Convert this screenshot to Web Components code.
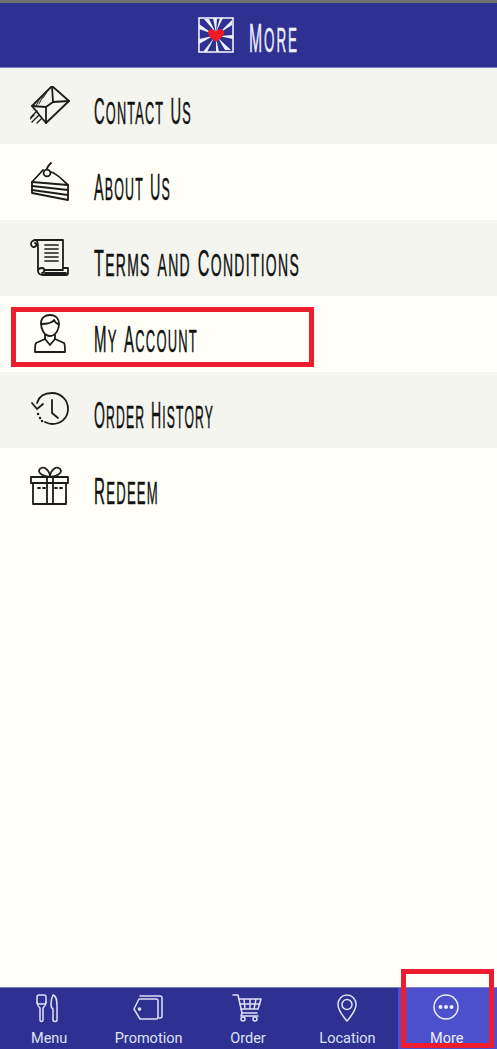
<!DOCTYPE html>
<html lang="en">
<head>
<meta charset="utf-8">
<title>More</title>
<style>
  html, body { margin: 0; height: 100%; background: #fffff8; }
  body { font-family: "Liberation Sans", sans-serif; }
</style>
</head>
<body>
<app-shell>
  <app-header slot="header">More</app-header>
  <more-row shade label="Contact Us" width="98">
    <svg viewBox="0 0 40 40"><path d="M22 0 39 15 16 37 2 20Z"/><path d="M22 0 23 16 39 15M2 20 16 21 16 37M16 21 23 16"/><path d="M9 14 6 20M13 10 9 18M17 6 13 12" stroke-width="1"/><path d="M7 25 1 31M9 29 2 36M4 29 0 33M11 33 7 37" stroke-width="1.300"/></svg>
  </more-row>
  <more-row label="About Us" width="77">
    <svg viewBox="0 0 40 40"><path d="M13 8 2 20V31L38 38V23C32 17 25 11 21 10"/><path d="M2 20 38 23M2 24 38 28M2 28 38 33"/><circle cx="17" cy="11" r="3.400"/><path d="M17 7C17 5 19 3 21 1"/></svg>
  </more-row>
  <more-row shade label="Terms and Conditions" width="206">
    <svg viewBox="0 0 40 40"><path d="M6 2H33V30M8 9V32M6 2C3 2 1 4 1 6 1 9 4 10 6 8 7 7 6 5 5 5M6 2C8 3 8 6 8 9"/><path d="M33 30H38V35C38 37 37 37 36 37H13C10 37 8 35 8 33 8 30 10 30 12 30 15 30 15 35 12 35"/><path d="M15 32H33M15 35H36"/><path d="M15 7H28M15 11H28M15 15H28M15 19H28M15 23H28" stroke-width="1.700"/></svg>
  </more-row>
  <more-row label="My Account" width="104">
    <svg viewBox="0 0 40 40"><path d="M11 9C11 4 15 1 20 1 26 1 29 5 29 10 29 15 26 22 20 22 14 22 11 15 11 9Z"/><path d="M11 10C15 10 22 9 24 6 25 8 27 10 29 10"/><path d="M15 21V25L6 29C5 30 5 32 5 38H35C35 32 35 30 34 29L25 25V21"/><path d="M15 25 20 31 25 25"/></svg>
  </more-row>
  <more-row shade label="Order History" width="120">
    <svg viewBox="0 0 40 40"><path d="M7 13C9 6 15 3 22 3 31 3 38 10 38 19 38 28 31 34 22 34 19 34 17 33 15 32"/><path d="M2 13 7 19 13 14M22 10V23L28 28"/><path d="M8 24H8.100M10 28H10.100M12 31H12.100" stroke-width="2.400"/></svg>
  </more-row>
  <more-row label="Redeem" width="65">
    <svg viewBox="0 0 40 40"><path d="M1 11H38V17H1ZM3 17V38H36V17M17 11V38M23 11V38"/><path d="M20 11C14 10 9 8 9 5 9 2 13 1 15 2 18 4 20 8 20 11 20 8 22 4 25 2 27 1 31 2 31 5 31 8 26 10 20 11Z"/><path d="M8 22H10M13 22H15M25 22H27M30 22H32"/></svg>
  </more-row>
  <tab-bar slot="footer">
    <tab-item label="Menu">
      <svg viewBox="0 0 30 30"><rect x="3" y="1" width="9" height="9" rx="2"/><path d="M3 8C3 12 5 13 6 14V26C6 28 9 28 9 26V14C10 13 12 12 12 8"/><path d="M19 1C23 2 23 8 23 13V26C23 28 19 28 19 26V15C17 14 17 12 17 10 17 6 18 3 19 1Z"/></svg>
    </tab-item>
    <tab-item label="Promotion">
      <svg viewBox="0 0 30 30"><path d="M7 2H27C28 2 29 3 29 4V22C29 23 28 24 27 24H26"/><path d="M6 5H23C24 5 25 6 25 7V23C25 24 24 25 23 25H7L1 15Z"/><circle cx="6.500" cy="15" r="1.100" fill="currentColor"/></svg>
    </tab-item>
    <tab-item label="Order">
      <svg viewBox="0 0 30 30"><path d="M1 1H6L10 19H25"/><path d="M7 5H29L26 15H9M12 5 13 15M18 5V15M24 5 22 15M8 10H28M10 19 9 22H26"/><circle cx="11" cy="25" r="2"/><circle cx="23" cy="25" r="2"/></svg>
    </tab-item>
    <tab-item label="Location">
      <svg viewBox="0 0 30 30"><path d="M15 27C11 22 6 17 6 10.500 6 5 10 1 15 1 20 1 24 5 24 10.500 24 17 19 22 15 27Z"/><circle cx="15" cy="10.500" r="5"/></svg>
    </tab-item>
    <tab-item label="More" active>
      <svg viewBox="0 0 30 30"><circle cx="15" cy="13" r="12"/><circle cx="9.500" cy="13" r="2" fill="currentColor" stroke="none"/><circle cx="15" cy="13" r="2" fill="currentColor" stroke="none"/><circle cx="20.500" cy="13" r="2" fill="currentColor" stroke="none"/></svg>
    </tab-item>
  </tab-bar>
  <mark-box slot="overlay" style="--x:11px;--y:307px;--w:303px;--h:60px"></mark-box>
  <mark-box slot="overlay" style="--x:401px;--y:969px;--w:93px;--h:79px"></mark-box>
</app-shell>

<script>
class AppShell extends HTMLElement {
  constructor() {
    super();
    this.attachShadow({ mode: "open" });
    this.shadowRoot.innerHTML = `
      <style>
        :host { display: flex; flex-direction: column; height: 1049px; position: relative; overflow: hidden; background: #fffff8; }
        .status { height: 3px; background: #707070; flex: none; }
        main { flex: 1; }
      </style>
      <div class="status"></div>
      <slot name="header"></slot>
      <main><slot></slot></main>
      <slot name="footer"></slot>
      <slot name="overlay"></slot>
    `;
  }
}

function capsMarkup(text) {
  return text.replace(/[A-Z]/g, (c) => `<span class="cap">${c}</span>`);
}

class AppHeader extends HTMLElement {
  constructor() {
    super();
    this.attachShadow({ mode: "open" });
    this.shadowRoot.innerHTML = `
      <style>
        :host { display: flex; align-items: center; justify-content: center; height: 65px; box-sizing: border-box; background: #2e3192; border-bottom: 1px solid #7d80bd; color: #eceefa; }
        svg { width: 36px; height: 36px; margin-left: -1px; flex: none; }
        .title { width: 50px; margin-left: 15px; height: 40px; display: flex; align-items: center; }
        .title span { display: inline-block; font: 400 50px/50px "Liberation Sans", sans-serif; font-variant: small-caps; letter-spacing: 5px; -webkit-text-stroke: .5px currentColor; white-space: nowrap; transform-origin: left center; margin-top: 3px; }
        .title span .cap { font-size: 41px; }
      </style>
      <svg viewBox="0 0 36 36">
        <rect x="1" y="1" width="34" height="34" fill="#2e3192" stroke="#eef0fb" stroke-width="1.600"/>
        <g fill="#eef0fb">
          <path d="M18 16 6 2H11ZM18 16 15 1H19ZM18 15 22 1H25ZM20 17 34 3V8ZM21 19 35 18V22ZM20 21 33 33H27ZM18 21 21 35H18ZM16 21 9 35H5ZM15 19 1 27V22ZM15 17 1 12V7Z"/>
        </g>
        <path d="M18 25C14 22 10 19 10 15.500 10 12 15 11 18 14.500 21 11 26 12 26 15.500 26 19 22 22 18 25Z" fill="#ed1c24"/>
      </svg>
      <div class="title"><span></span></div>
    `;
  }

  connectedCallback() {
    const label = this.shadowRoot.querySelector(".title span");
    label.innerHTML = capsMarkup(this.textContent.trim());
    label.style.transform = `scaleX(${50 / label.getBoundingClientRect().width})`;
  }
}

class MoreRow extends HTMLElement {
  constructor() {
    super();
    this.attachShadow({ mode: "open" });
    this.shadowRoot.innerHTML = `
      <style>
        :host { display: flex; align-items: center; height: 76px; padding-left: 30px; background: #fffff8; color: #121210; }
        :host([shade]) { background: #f4f5ef; }
        .icon { width: 40px; height: 40px; flex: none; margin-right: 24px; }
        ::slotted(svg) { display: block; width: 40px; height: 40px; fill: none; stroke: #1c1c1a; stroke-width: 1.800; stroke-linejoin: round; stroke-linecap: round; }
        .label { display: inline-block; font: 400 46px/44px "Liberation Sans", sans-serif; font-variant: small-caps; letter-spacing: 3px; -webkit-text-stroke: .5px currentColor; white-space: nowrap; transform-origin: left center; margin-top: 7px; }
        .label .cap { font-size: 37px; }
      </style>
      <div class="icon"><slot></slot></div>
      <span class="label"></span>
    `;
  }

  connectedCallback() {
    const label = this.shadowRoot.querySelector(".label");
    label.innerHTML = capsMarkup(this.getAttribute("label"));
    // squeeze the label to the narrow width of the app's display font
    const natural = label.getBoundingClientRect().width;
    const want = Number(this.getAttribute("width"));
    label.style.transform = `scaleX(${want / natural})`;
  }
}

class TabBar extends HTMLElement {
  constructor() {
    super();
    this.attachShadow({ mode: "open" });
    this.shadowRoot.innerHTML = `
      <style>
        :host { display: grid; grid-template-columns: repeat(5, 1fr); height: 62px; background: #2e3192; border-top: 1px solid #7d80bd; box-sizing: border-box; }
      </style>
      <slot></slot>
    `;
  }
}

class TabItem extends HTMLElement {
  constructor() {
    super();
    this.attachShadow({ mode: "open" });
    this.shadowRoot.innerHTML = `
      <style>
        :host { display: flex; flex-direction: column; align-items: center; color: #dfe1f5; padding-top: 6px; min-width: 0; }
        :host([active]) { background: #4c50cd; color: #eceefa; }
        ::slotted(svg) { display: block; width: 30px; height: 30px; margin-left: -2px; fill: none; stroke: currentColor; stroke-width: 1.500; stroke-linejoin: round; stroke-linecap: round; }
        .label { font: 400 14.500px/16px Roboto, sans-serif; margin-top: 7px; margin-left: -1px; white-space: nowrap; }
      </style>
      <slot></slot>
      <span class="label"></span>
    `;
  }

  connectedCallback() {
    this.shadowRoot.querySelector(".label").textContent = this.getAttribute("label");
  }
}

class MarkBox extends HTMLElement {
  constructor() {
    super();
    this.attachShadow({ mode: "open" });
    this.shadowRoot.innerHTML = `
      <style>
        :host { position: absolute; left: var(--x); top: var(--y); width: var(--w); height: var(--h); box-sizing: border-box; border: 5px solid #ed1c2e; pointer-events: none; }
      </style>
    `;
  }
}

customElements.define("app-shell", AppShell);
customElements.define("app-header", AppHeader);
customElements.define("more-row", MoreRow);
customElements.define("tab-bar", TabBar);
customElements.define("tab-item", TabItem);
customElements.define("mark-box", MarkBox);
</script>
</body>
</html>
